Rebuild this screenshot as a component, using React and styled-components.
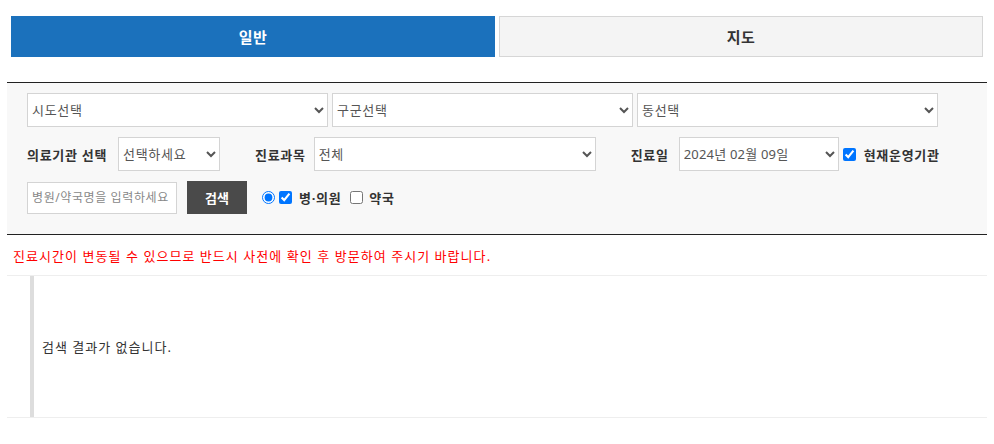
import React from 'react';
import styled, { createGlobalStyle } from 'styled-components';

const GlobalStyle = createGlobalStyle`
  body {
    margin: 0;
    background: #fff;
    font-family: "Noto Sans", "Noto Sans CJK KR", sans-serif;
    color: #333;
  }
`;

const Page = styled.div`
  padding: 0 7px;
`;

const Tabs = styled.div`
  display: flex;
  gap: 4px;
  padding: 16px 4px 0;
`;

const Tab = styled.div`
  flex: 1;
  height: 41px;
  box-sizing: border-box;
  display: flex;
  align-items: center;
  justify-content: center;
  font-size: 15px;
  font-weight: 700;
  letter-spacing: 0.5px;
  background: ${(p) => (p.active ? '#1b71bc' : '#f4f4f4')};
  color: ${(p) => (p.active ? '#fff' : '#333')};
  border: 1px solid ${(p) => (p.active ? '#1b71bc' : '#d6d6d6')};
`;

const SearchBox = styled.div`
  margin-top: 25px;
  background: #f8f8f8;
  border-top: 1px solid #222;
  border-bottom: 1px solid #222;
  padding: 10px 20px 20px;
  display: flex;
  flex-direction: column;
  gap: 10px;
`;

const AreaRow = styled.div`
  display: grid;
  grid-template-columns: repeat(3, 1fr);
  gap: 4px;
  width: 911px;
`;

const Row = styled.div`
  display: flex;
  align-items: center;
`;

const Select = styled.select`
  height: 34px;
  box-sizing: border-box;
  width: ${(p) => p.w || '100%'};
  border: 1px solid #d4d4d4;
  background: #fff;
  color: #555;
  font-family: inherit;
  font-size: 13px;
  letter-spacing: ${(p) => p.ls ?? 0.7}px;
  padding: 0;
  border-radius: 0;
  margin-left: ${(p) => p.ml || 0}px;
  outline: none;
`;

const Label = styled.span`
  font-size: 13px;
  font-weight: 700;
  letter-spacing: 0.7px;
  color: #333;
  margin-left: ${(p) => p.ml || 0}px;
`;

const Check = styled.input`
  margin: 0 0 0 ${(p) => p.ml || 0}px;
  width: 13px;
  height: 13px;
`;

const NameInput = styled.input`
  width: 150px;
  height: 32px;
  box-sizing: border-box;
  border: 1px solid #d4d4d4;
  padding: 0 4px;
  font-family: inherit;
  font-size: 12px;
  letter-spacing: 0.6px;
  &::placeholder { color: #888; }
`;

const SearchButton = styled.button`
  margin-left: 10px;
  width: 60px;
  height: 33px;
  border: 0;
  background: #4a4a4a;
  color: #fff;
  font-family: inherit;
  font-size: 13px;
  font-weight: 700;
`;

const Notice = styled.p`
  margin: 0;
  height: 40px;
  display: flex;
  align-items: center;
  padding-left: 6px;
  font-size: 13px;
  letter-spacing: 1.05px;
  color: #f00;
  border-bottom: 1px solid #eee;
`;

const Result = styled.div`
  border-bottom: 1px solid #eee;
  padding-left: 23px;
`;

const ResultInner = styled.div`
  height: 141px;
  border-left: 4px solid #ddd;
  padding-left: 8px;
  display: flex;
  align-items: center;
  font-size: 13px;
  letter-spacing: 1px;
  color: #333;
`;

export default function App() {
  return (
    <Page>
      <GlobalStyle />
      <Tabs>
        <Tab active>일반</Tab>
        <Tab>지도</Tab>
      </Tabs>
      <SearchBox>
        <AreaRow>
          <Select><option>시도선택</option></Select>
          <Select><option>구군선택</option></Select>
          <Select><option>동선택</option></Select>
        </AreaRow>
        <Row>
          <Label>의료기관 선택</Label>
          <Select w="102px" ml={11}><option>선택하세요</option></Select>
          <Label ml={35}>진료과목</Label>
          <Select w="282px" ml={8}><option>전체</option></Select>
          <Label ml={35}>진료일</Label>
          <Select w="160px" ml={10} ls={0.2}><option>2024년 02월 09일</option></Select>
          <Check type="checkbox" defaultChecked ml={4} />
          <Label ml={8}>현재운영기관</Label>
        </Row>
        <Row>
          <NameInput placeholder="병원/약국명을 입력하세요" />
          <SearchButton>검색</SearchButton>
          <Check type="radio" defaultChecked ml={15} />
          <Check type="checkbox" defaultChecked ml={4} />
          <Label ml={7}>병·의원</Label>
          <Check type="checkbox" ml={9} />
          <Label ml={6}>약국</Label>
        </Row>
      </SearchBox>
      <Notice>진료시간이 변동될 수 있으므로 반드시 사전에 확인 후 방문하여 주시기 바랍니다.</Notice>
      <Result>
        <ResultInner>검색 결과가 없습니다.</ResultInner>
      </Result>
    </Page>
  );
}
